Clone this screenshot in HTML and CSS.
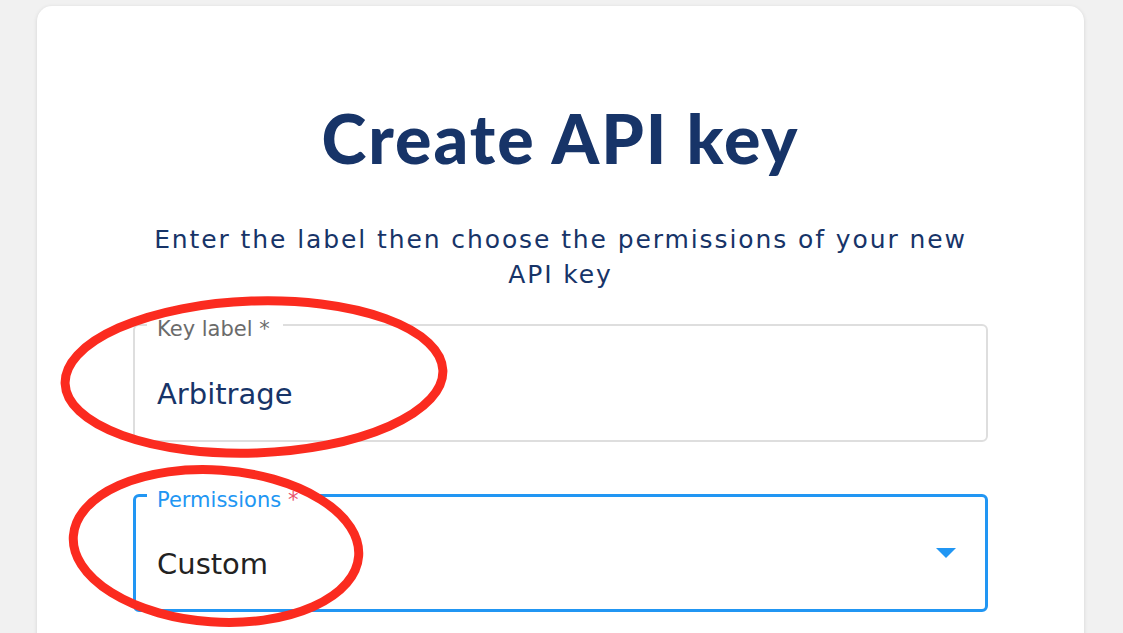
FILE: index.html
```html
<!DOCTYPE html>
<html lang="en">
<head>
    <meta charset="UTF-8" />
    <meta name="viewport" content="width=device-width, initial-scale=1" />
    <title>Create API key</title>
    <link rel="stylesheet" href="styles.css">
</head>
<body>
    <div class="card">
        <h1 class="title">Create API key</h1>
        <p class="subtitle">Enter the label then choose the permissions of your new<br>API key</p>

        <fieldset class="field">
            <legend class="field-label">Key label *</legend>
            <div class="field-value">Arbitrage</div>
        </fieldset>

        <fieldset class="field field-focused">
            <legend class="field-label">Permissions <span class="required">*</span></legend>
            <div class="field-value field-select">
                <span>Custom</span>
                <svg class="caret" width="20" height="10" viewBox="0 0 20 10"><path d="M0 0 H20 L10 10 Z" fill="#2196f3"/></svg>
            </div>
        </fieldset>
    </div>

    <!-- annotation marks drawn over the screenshot -->
    <svg class="marks" width="1123" height="633" viewBox="0 0 1123 633">
        <ellipse cx="254" cy="377" rx="189" ry="76" fill="none" stroke="#fb2b1f" stroke-width="9" transform="rotate(-2 254 377)"/>
        <ellipse cx="216" cy="546" rx="143" ry="76" fill="none" stroke="#fb2b1f" stroke-width="9" transform="rotate(4 216 546)"/>
    </svg>
</body>
</html>
```

FILE: styles.css
```css
body {
    margin: 0;
    background-color: #f1f1f1;
    font-family: "DejaVu Sans", "Noto Sans", sans-serif;
    overflow: hidden;
}
.card {
    margin: 6px 0 0 37px;
    width: 1047px;
    min-height: 700px;
    box-sizing: border-box;
    padding: 98px 96px 40px;
    background: #fff;
    border-radius: 15px;
    box-shadow: 0 1px 4px rgba(0, 0, 0, 0.12);
}
.title {
    margin: 0;
    text-align: center;
    font-family: Lato, "Noto Sans", sans-serif;
    font-size: 68px;
    line-height: 1;
    font-weight: 900;
    letter-spacing: 2px;
    color: #173468;
}
.subtitle {
    margin: 50px 0 16px;
    text-align: center;
    font-size: 25px;
    line-height: 35px;
    letter-spacing: 1.9px;
    color: #173468;
}
.field {
    margin: 0 0 37px;
    padding: 0 22px;
    border: 2px solid #dedede;
    border-radius: 6px;
    min-width: 0;
}
.field-label {
    margin-left: -10px;
    padding: 9px 13px 0 10px;
    font-size: 21px;
    line-height: 24px;
    color: #6b6b6b;
}
.field-value {
    padding: 33px 0 26px;
    font-size: 29px;
    line-height: 40px;
    color: #173468;
}
.field-focused {
    padding: 0 21px;
    border: 3px solid #2196f3;
}
.field-focused .field-label {
    color: #2196f3;
}
.field-focused .field-value {
    padding: 32px 8px 25px 0;
    color: #222;
}
.required {
    color: #e8536b;
}
.field-select {
    display: flex;
    justify-content: space-between;
}
.caret {
    display: block;
    margin-top: 4px;
}
.marks {
    position: absolute;
    left: 0;
    top: 0;
    pointer-events: none;
}
```
